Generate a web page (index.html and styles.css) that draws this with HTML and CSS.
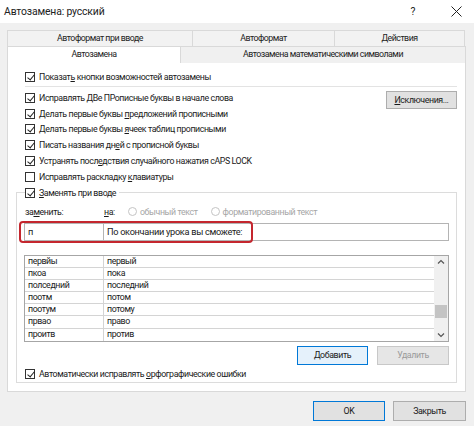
FILE: index.html
```html
<!DOCTYPE html>
<html lang="ru">
<head>
<meta charset="utf-8">
<title>Автозамена: русский</title>
<link rel="stylesheet" href="styles.css">
</head>
<body>
<div class="titlebar">
  <span class="title">Автозамена: русский</span>
  <span class="help">?</span>
  <span class="close"><svg width="11" height="11" viewBox="0 0 11 11"><path d="M0.5 0.5L10.5 10.5M10.5 0.5L0.5 10.5" stroke="#222" stroke-width="1" fill="none"/></svg></span>
</div>
<div class="body">
  <div class="tabrow row1">
    <div class="tab">Автоформат при вводе</div>
    <div class="tab">Автоформат</div>
    <div class="tab">Действия</div>
  </div>
  <div class="tabrow row2">
    <div class="tab selected">Автозамена</div>
    <div class="tab">Автозамена математическими символами</div>
  </div>
  <div class="panel">
    <div class="top">
      <label class="chk"><span class="box on"></span><span>Показат<u>ь</u> кнопки возможностей автозамены</span></label>
    </div>
    <div class="sep"></div>
    <div class="opts">
      <div class="optlist">
        <label class="chk"><span class="box on"></span><span>Исправлять <u>Д</u>Ве ПРописные буквы в начале слова</span></label>
        <label class="chk"><span class="box on"></span><span>Делать первые буквы <u>п</u>редложений прописными</span></label>
        <label class="chk"><span class="box on"></span><span>Делать первые буквы <u>я</u>чеек таблиц прописными</span></label>
        <label class="chk"><span class="box on"></span><span>Писать названия дн<u>е</u>й с прописной буквы</span></label>
        <label class="chk"><span class="box on"></span><span>Устранять посл<u>е</u>дствия случайного нажатия cAPS LOCK</span></label>
        <label class="chk"><span class="box"></span><span>Исправлять раскладку <u>к</u>лавиатуры</span></label>
      </div>
      <button class="btn exc"><u>И</u>сключения...</button>
    </div>
    <div class="group">
      <label class="chk legend"><span class="box on"></span><span><u>З</u>аменять при вводе</span></label>
      <div class="labels">
        <span class="lab1">за<u>м</u>енить:</span>
        <span class="lab2"><u>н</u>а:</span>
        <span class="radio"></span><span class="dis rtext1">обычный текст</span>
        <span class="radio"></span><span class="dis">форматированный текст</span>
      </div>
      <div class="inputs">
        <div class="inp inp1">п</div>
        <div class="inp inp2">По окончании урока вы сможете:</div>
        <div class="highlight"></div>
      </div>
      <div class="list">
        <div class="rows">
          <div class="row"><span class="c1">первйы</span><span class="c2">первый</span></div>
          <div class="row"><span class="c1">пкоа</span><span class="c2">пока</span></div>
          <div class="row"><span class="c1">полседний</span><span class="c2">последний</span></div>
          <div class="row"><span class="c1">поотм</span><span class="c2">потом</span></div>
          <div class="row"><span class="c1">поотум</span><span class="c2">потому</span></div>
          <div class="row"><span class="c1">првао</span><span class="c2">право</span></div>
          <div class="row last"><span class="c1">проитв</span><span class="c2">против</span></div>
        </div>
        <div class="scroll">
          <svg class="arr" width="14" height="12" viewBox="0 0 14 12"><path d="M4 7.5L7 4.5L10 7.5" stroke="#555" stroke-width="1.2" fill="none"/></svg>
          <div class="track"><div class="thumb"></div></div>
          <svg class="arr" width="14" height="12" viewBox="0 0 14 12"><path d="M4 4.5L7 7.5L10 4.5" stroke="#555" stroke-width="1.2" fill="none"/></svg>
        </div>
      </div>
      <div class="actions">
        <button class="btn add">Добавить</button>
        <button class="btn del">Удалить</button>
      </div>
      <label class="chk auto"><span class="box on"></span><span>Автоматически исправлять <u>о</u>рфографические ошибки</span></label>
    </div>
  </div>
  <div class="footer">
    <button class="btn ok">OK</button>
    <button class="btn close-btn">Закрыть</button>
  </div>
</div>
<svg class="cursor" width="20" height="32" viewBox="0 0 20 32"><path d="M1 1L1 25L6.6 19.6L10.6 29.4L14.2 27.8L10.2 18.4L17.6 18.4Z" fill="#fff" stroke="#000" stroke-width="1.1" stroke-linejoin="miter"/></svg>
</body>
</html>
```
FILE: styles.css
```css
* { box-sizing: border-box; margin: 0; padding: 0; }
html, body { width: 474px; height: 426px; }
body {
  margin: 0;
  font-family: Roboto, "Noto Sans", sans-serif;
  font-size: 8.8px;
  letter-spacing: -0.4px;
  color: #1a1a1a;
  background: #f0f0f0;
  overflow: hidden;
  position: relative;
}
u { text-decoration: underline; text-underline-offset: 1px; }
.titlebar {
  height: 23px;
  background: #fff;
  display: flex;
  align-items: center;
  padding-left: 4px;
  font-size: 10.4px;
  letter-spacing: -0.15px;
  color: #222;
}
.title { flex: 1; }
.help { width: 20px; text-align: center; font-size: 10.4px; }
.close { width: 20px; margin-left: 23px; margin-right: 8px; display: flex; justify-content: center; }
.body { padding: 7px 8px 0 7px; }
.tabrow { display: grid; height: 16px; }
.row1 { grid-template-columns: 186px 142px 130px; }
.row2 { grid-template-columns: 174px 285px; position: relative; z-index: 2; height: 16px; }
.tab {
  border: 1px solid #d9d9d9;
  border-bottom: none;
  background: #f0f0f0;
  text-align: center;
  line-height: 15px;
  letter-spacing: -0.5px;
  color: #222;
}
.tab + .tab { border-left: none; }
.row1 .tab { background: #f2f2f2; }
.tab.selected { background: #fff; height: 17px; }
.panel {
  height: 330px;
  background: #fff;
  border: 1px solid #d9d9d9;
  padding: 6px 8px 0 8px;
  display: flex;
  flex-direction: column;
  position: relative;
  z-index: 1;
}
.chk {
  display: flex;
  align-items: center;
  height: 15.8px;
  gap: 4px;
  white-space: nowrap;
}
.box {
  width: 10px;
  height: 10px;
  border: 1px solid #333;
  background: #fff;
  flex: none;
  position: relative;
}
.box.on::after {
  content: "";
  position: absolute;
  left: 2.5px;
  top: 0px;
  width: 3px;
  height: 6px;
  border-right: 1px solid #222;
  border-bottom: 1px solid #222;
  transform: rotate(40deg);
}
.top { padding-left: 9px; height: 16px; }
.sep { height: 1px; background: #e3e3e3; margin: 1px 0 3px 9px; }
.opts { display: flex; justify-content: space-between; padding-left: 9px; }
.optlist { display: flex; flex-direction: column; }
.btn {
  font-family: inherit;
  font-size: 8.8px;
  letter-spacing: -0.4px;
  color: #1a1a1a;
  background: #e1e1e1;
  border: 1px solid #adadad;
  height: 18px;
}
.exc { width: 71px; margin-top: 1px; }
.group {
  margin-top: 7px;
  border: 1px solid #dcdcdc;
  height: 191px;
  padding: 0 7px 0 7px;
  display: flex;
  flex-direction: column;
}
.legend {
  margin-top: -8px;
  margin-left: 1px;
  align-self: flex-start;
  background: #fff;
  padding-right: 3px;
  height: 16px;
}
.labels {
  display: flex;
  align-items: center;
  height: 18px;
  margin-top: 2px;
  padding-left: 1px;
}
.lab1 { width: 79px; }
.lab2 { width: 24px; }
.radio {
  width: 9px;
  height: 9px;
  border: 1px solid #c4c4c4;
  border-radius: 50%;
  margin-right: 3px;
  flex: none;
}
.dis { color: #a6a6a6; }
.rtext1 { margin-right: 13px; }
.inputs {
  display: flex;
  height: 18px;
  margin-top: 2px;
  position: relative;
  font-size: 9.2px;
  letter-spacing: -0.3px;
}
.inp {
  border: 1px solid #b4b4b4;
  background: #fff;
  line-height: 16px;
  padding-left: 3px;
  white-space: nowrap;
}
.inp1 { width: 80px; }
.inp2 { flex: 1; border-left: none; }
.highlight {
  position: absolute;
  left: -5px;
  top: -2px;
  width: 234px;
  height: 22px;
  border: 2px solid #c4262e;
  border-radius: 4px;
}
.list {
  margin-top: 14px;
  height: 87px;
  border: 1px solid #a6a6a6;
  display: flex;
  background: #fff;
}
.rows { flex: 1; display: flex; flex-direction: column; }
.row {
  display: flex;
  height: 12.2px;
  border-bottom: 1px solid #d4d4d4;
  line-height: 11px;
}
.row.last { border-bottom: none; }
.c1 { width: 79px; border-right: 1px solid #d4d4d4; padding-left: 3px; }
.c2 { flex: 1; padding-left: 3px; }
.scroll {
  width: 14px;
  background: #f0f0f0;
  display: flex;
  flex-direction: column;
}
.arr { flex: none; display: block; }
.track { flex: 1; position: relative; }
.thumb {
  position: absolute;
  left: 1px;
  right: 1px;
  top: 37px;
  height: 13px;
  background: #c4c4c4;
}
.actions {
  display: flex;
  justify-content: flex-end;
  gap: 9px;
  margin-top: 4px;
}
.add { width: 71px; height: 19px; background: #e5f1fb; border-color: #0078d7; }
.del { width: 72px; height: 19px; color: #9a9a9a; background: #e6e6e6; border-color: #c8c8c8; }
.auto { margin-top: 1px; padding-left: 1px; }
.footer {
  display: flex;
  justify-content: flex-end;
  gap: 8px;
  margin-top: 9px;
  padding-right: 0;
}
.ok { width: 72px; height: 20px; border-color: #0078d7; }
.close-btn { width: 73px; height: 20px; }
.cursor { position: absolute; left: 339px; top: 361px; }
```
